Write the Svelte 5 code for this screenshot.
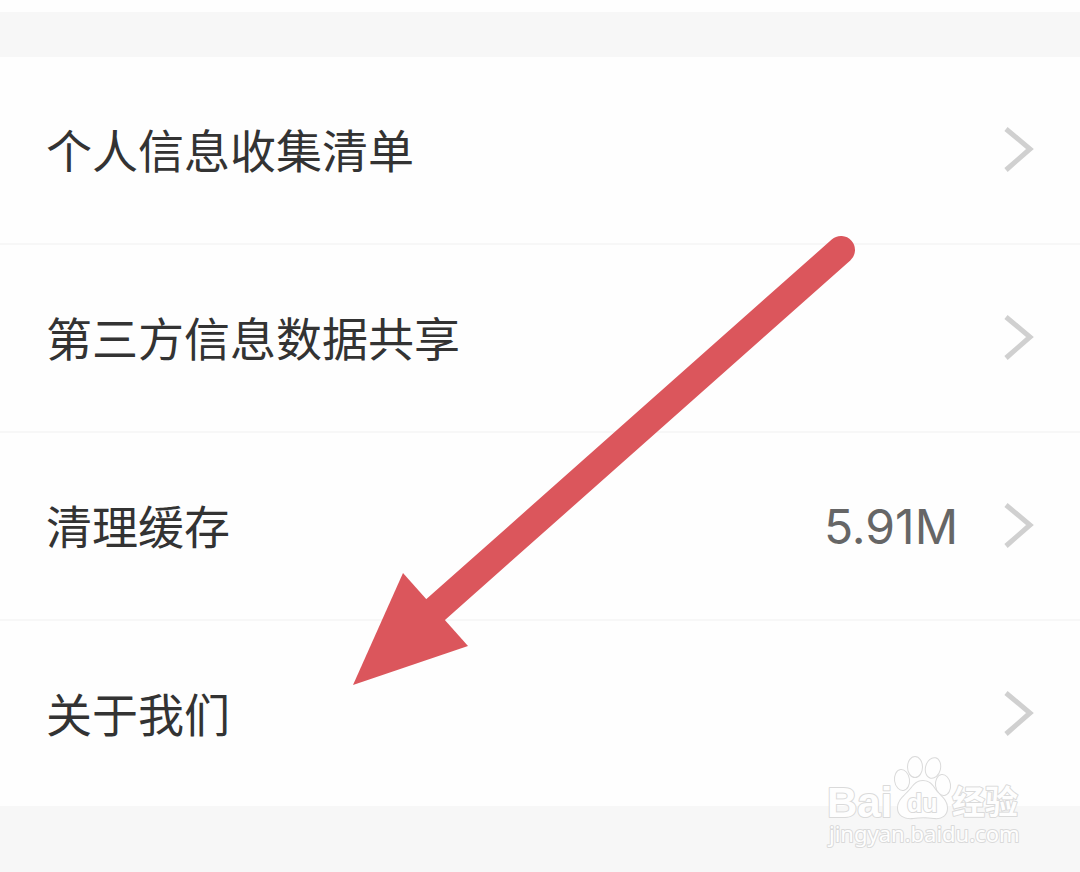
<script lang="ts">
  interface SettingItem {
    label: string;
    value?: string;
  }

  const items: SettingItem[] = [
    { label: '个人信息收集清单' },
    { label: '第三方信息数据共享' },
    { label: '清理缓存', value: '5.91M' },
    { label: '关于我们' }
  ];
</script>

<div class="page">
  <div class="separator"></div>

  <main class="settings">
    {#each items as item}
      <button class="row" type="button">
        <span class="label">{item.label}</span>
        {#if item.value}
          <span class="value">{item.value}</span>
        {/if}
        <svg class="chevron" viewBox="0 0 32 48" width="32" height="48" aria-hidden="true">
          <path d="M4 3 L28 23 L4 44" />
        </svg>
      </button>
    {/each}
  </main>

  <footer></footer>

  <svg class="arrow" viewBox="0 0 504 452" width="504" height="452" aria-hidden="true">
    <path class="shaft" d="M489 16 L82 377" />
    <path class="head" d="M1 451 L51 339 L116 412 Z" />
  </svg>

  <svg class="watermark" viewBox="0 0 210 100" width="210" height="100">
    <text class="brand" x="3" y="69">Bai</text>
    <g class="paw">
      <ellipse cx="91" cy="19" rx="7" ry="10" />
      <ellipse cx="109" cy="20" rx="7" ry="10" transform="rotate(14 109 20)" />
      <ellipse cx="78" cy="32" rx="7" ry="10" transform="rotate(-8 78 32)" />
      <ellipse cx="119" cy="37" rx="7" ry="10" transform="rotate(-8 119 37)" />
      <path d="M99 33 C107 33 109 39 113 44 C118 49 123 53 123 60 C123 67 118 71 110 70 C102 69 96 69 89 70 C80 71 74 67 74 60 C74 53 79 49 84 44 C89 39 91 33 99 33 Z" />
    </g>
    <text class="du" x="83" y="64">du</text>
    <text class="name" x="128" y="66">经验</text>
    <text class="site" x="5" y="94">jingyan.baidu.com</text>
  </svg>
</div>

<style>
  :global(body) {
    margin: 0;
    background: #f7f7f7;
  }

  .page {
    position: relative;
    display: flex;
    flex-direction: column;
    min-height: 100vh;
    overflow: hidden;
    background: #fefefe;
    font-family: Inter, 'Noto Sans CJK SC', sans-serif;
  }

  .separator {
    height: 45px;
    margin-top: 12px;
    background: #f7f7f7;
  }

  .settings {
    display: flex;
    flex-direction: column;
  }

  .row {
    display: flex;
    align-items: center;
    width: 100%;
    height: 188px;
    padding: 0 46px;
    border: none;
    border-bottom: 2px solid #f7f7f7;
    background: #fefefe;
    font-family: inherit;
    font-size: 46px;
    line-height: 64px;
    text-align: left;
    cursor: pointer;
  }

  .row:last-child {
    height: 185px;
    border-bottom: none;
  }

  .label,
  .value {
    padding-top: 2px;
  }

  .label {
    flex: 1;
    color: #333;
  }

  .value {
    color: #666;
    font-size: 48px;
  }

  .chevron {
    flex: none;
    margin-left: 44px;
  }

  .chevron path {
    fill: none;
    stroke: #d0d0d0;
    stroke-width: 5;
  }

  footer {
    flex: 1;
    min-height: 64px;
    background: #f7f7f7;
  }

  .arrow {
    position: absolute;
    top: 234px;
    left: 352px;
    pointer-events: none;
  }

  .shaft {
    fill: none;
    stroke: #db565c;
    stroke-width: 28;
    stroke-linecap: round;
  }

  .head {
    fill: #db565c;
  }

  .watermark {
    position: absolute;
    right: 46px;
    bottom: 24px;
    overflow: visible;
    pointer-events: none;
  }

  .watermark text,
  .paw {
    fill: #fefefe;
    stroke: #dadada;
    stroke-width: 2;
    stroke-linejoin: round;
    paint-order: stroke;
  }

  .brand {
    font: bold 42px 'Liberation Sans', sans-serif;
  }

  .du {
    font: bold 25px 'Liberation Sans', sans-serif;
  }

  .name {
    font: bold 33px 'Noto Sans CJK SC', sans-serif;
  }

  .site {
    font: 22px 'Noto Sans', sans-serif;
  }
</style>
